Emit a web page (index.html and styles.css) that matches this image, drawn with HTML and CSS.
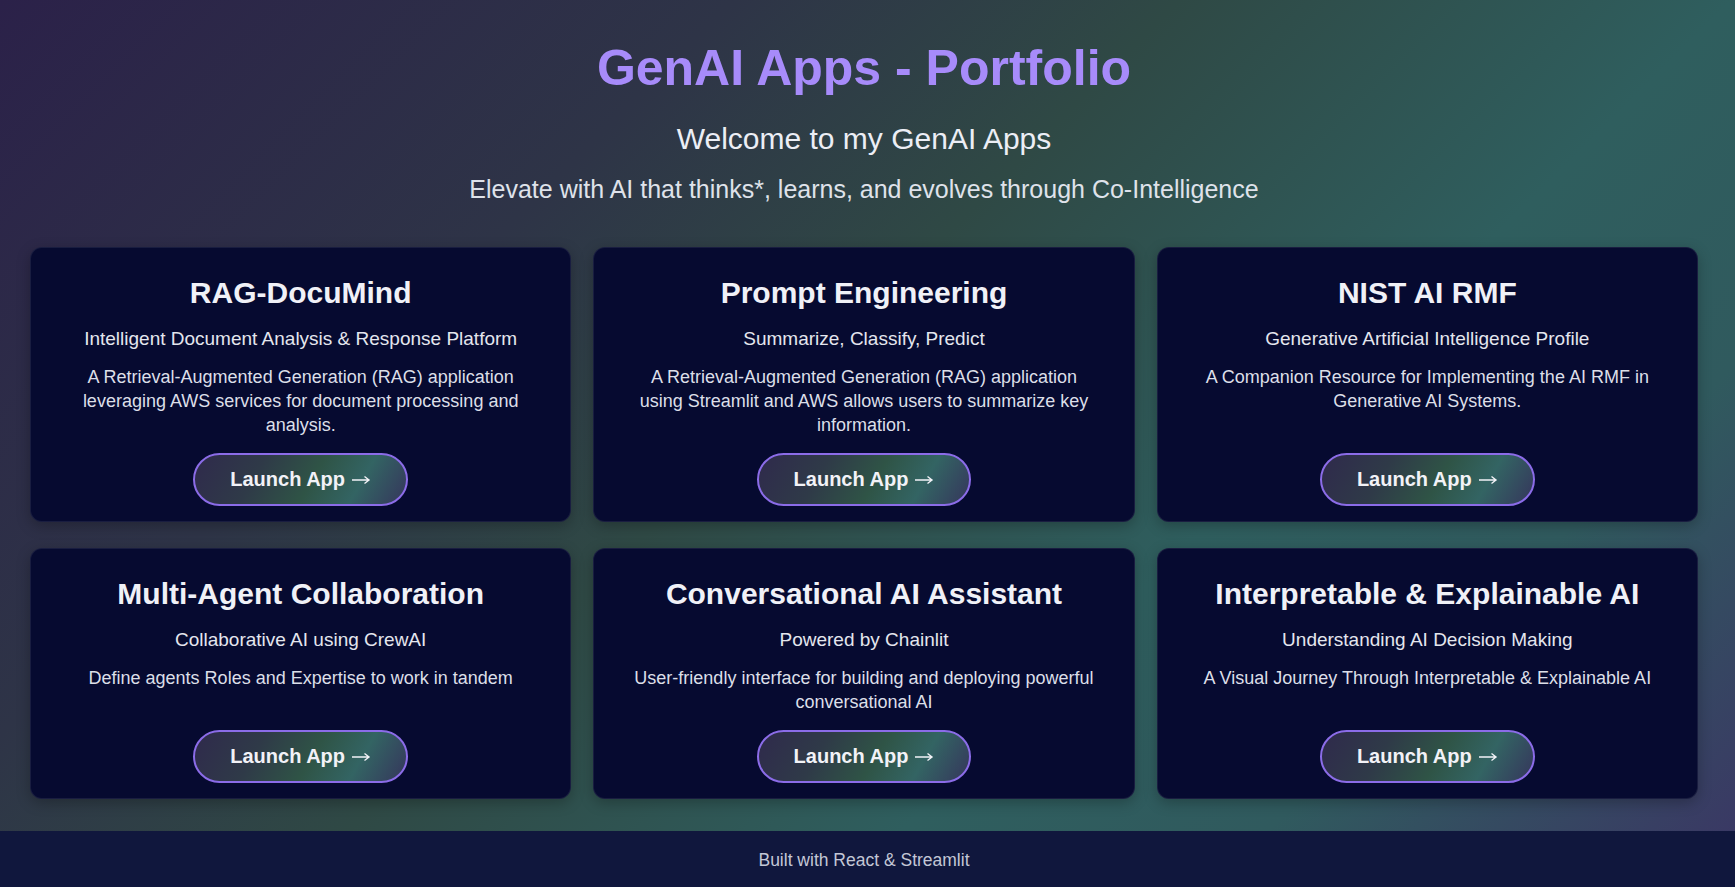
FILE: index.html
```html
<!DOCTYPE html>
<html lang="en">
<head>
    <meta charset="UTF-8">
    <meta name="viewport" content="width=device-width, initial-scale=1.0">
    <title>GenAI Apps - Portfolio</title>
    <link rel="stylesheet" href="styles.css">
</head>
<body>
    <header>
        <h1>GenAI Apps - Portfolio</h1>
        <h2>Welcome to my GenAI Apps</h2>
        <p class="tagline">Elevate with AI that thinks*, learns, and evolves through Co-Intelligence</p>
    </header>

    <div class="container">
        <div class="app-card">
            <h3>RAG-DocuMind</h3>
            <p class="subtitle">Intelligent Document Analysis &amp; Response Platform</p>
            <p class="desc">A Retrieval-Augmented Generation (RAG) application leveraging AWS services for document processing and analysis.</p>
            <a class="launch" href="#">Launch App <svg class="arrow" viewBox="0 0 20 10"><path d="M1 5h17M13.5 1.5L18 5l-4.5 3.5"/></svg></a>
        </div>
        <div class="app-card">
            <h3>Prompt Engineering</h3>
            <p class="subtitle">Summarize, Classify, Predict</p>
            <p class="desc">A Retrieval-Augmented Generation (RAG) application using Streamlit and AWS allows users to summarize key information.</p>
            <a class="launch" href="#">Launch App <svg class="arrow" viewBox="0 0 20 10"><path d="M1 5h17M13.5 1.5L18 5l-4.5 3.5"/></svg></a>
        </div>
        <div class="app-card">
            <h3>NIST AI RMF</h3>
            <p class="subtitle">Generative Artificial Intelligence Profile</p>
            <p class="desc">A Companion Resource for Implementing the AI RMF in Generative AI Systems.</p>
            <a class="launch" href="#">Launch App <svg class="arrow" viewBox="0 0 20 10"><path d="M1 5h17M13.5 1.5L18 5l-4.5 3.5"/></svg></a>
        </div>
        <div class="app-card">
            <h3>Multi-Agent Collaboration</h3>
            <p class="subtitle">Collaborative AI using CrewAI</p>
            <p class="desc">Define agents Roles and Expertise to work in tandem</p>
            <a class="launch" href="#">Launch App <svg class="arrow" viewBox="0 0 20 10"><path d="M1 5h17M13.5 1.5L18 5l-4.5 3.5"/></svg></a>
        </div>
        <div class="app-card">
            <h3>Conversational AI Assistant</h3>
            <p class="subtitle">Powered by Chainlit</p>
            <p class="desc">User-friendly interface for building and deploying powerful conversational AI</p>
            <a class="launch" href="#">Launch App <svg class="arrow" viewBox="0 0 20 10"><path d="M1 5h17M13.5 1.5L18 5l-4.5 3.5"/></svg></a>
        </div>
        <div class="app-card">
            <h3>Interpretable &amp; Explainable AI</h3>
            <p class="subtitle">Understanding AI Decision Making</p>
            <p class="desc">A Visual Journey Through Interpretable &amp; Explainable AI</p>
            <a class="launch" href="#">Launch App <svg class="arrow" viewBox="0 0 20 10"><path d="M1 5h17M13.5 1.5L18 5l-4.5 3.5"/></svg></a>
        </div>
    </div>

    <footer>
        <p>Built with React &amp; Streamlit</p>
    </footer>
</body>
</html>
```

FILE: styles.css
```css
body {
    font-family: "Liberation Sans", Arial, sans-serif;
    margin: 0;
    padding: 0;
    min-height: 100vh;
    color: #eceef5;
    background: linear-gradient(135deg, #2b2149 0%, #2e3447 28%, #2f4945 45%, #2f5e5e 66%, #305a5e 80%, #3b3565 100%);
}
header {
    text-align: center;
    padding: 38px 7px 0 0;
}
h1 {
    margin: 0 0 23px;
    font-size: 50px;
    line-height: 1.2;
    color: #a78bfa; /* Lavender */
}
h2 {
    margin: 0 0 17px;
    font-size: 30px;
    line-height: 1.2;
    font-weight: normal;
    color: #eceef5;
}
.tagline {
    margin: 0 0 43px;
    font-size: 25px;
    line-height: 30px;
    color: #dfe2ea;
}
.container {
    display: grid;
    grid-template-columns: repeat(3, 1fr);
    column-gap: 22px;
    row-gap: 26px;
    margin: 0 37px 0 30px;
    padding-bottom: 32px;
}
.app-card {
    display: flex;
    flex-direction: column;
    align-items: center;
    text-align: center;
    background-color: #060a30; /* Deep Navy */
    border: 1px solid rgba(255,255,255,0.08);
    border-radius: 12px;
    padding: 27px 36px 15px;
    box-shadow: 0 4px 14px rgba(0,0,0,0.25);
}
.app-card h3 {
    margin: 0 0 15px;
    font-size: 30px;
    line-height: 36px;
    color: #f0f1f7;
}
.app-card .subtitle {
    margin: 0 0 14px;
    font-size: 19px;
    line-height: 25px;
    color: #e4e6ee;
}
.app-card .desc {
    margin: 0 0 16px;
    font-size: 18px;
    line-height: 24px;
    color: #dcdfe8;
}
.launch {
    margin-top: auto;
    display: inline-flex;
    align-items: center;
    gap: 6px;
    padding: 12px 35px 13px;
    font-size: 20px;
    line-height: 24px;
    font-weight: bold;
    color: #f2f2f7;
    text-decoration: none;
    border: 2px solid #8b6ce8;
    border-radius: 30px;
    background: linear-gradient(120deg, #2f2a4c 0%, #2f3a48 30%, #2f5446 55%, #336463 76%, #35365c 100%);
}
.launch:hover {
    border-color: #a78bfa;
}
.arrow {
    width: 20px;
    height: 10px;
    margin-top: 1px;
    fill: none;
    stroke: #f2f2f7;
    stroke-width: 1.4;
}
footer {
    background-color: #10173d;
    text-align: center;
}
footer p {
    margin: 0;
    padding: 19px 7px 18px 0;
    font-size: 17.5px;
    line-height: 20px;
    color: #c3c7d6;
}
```
